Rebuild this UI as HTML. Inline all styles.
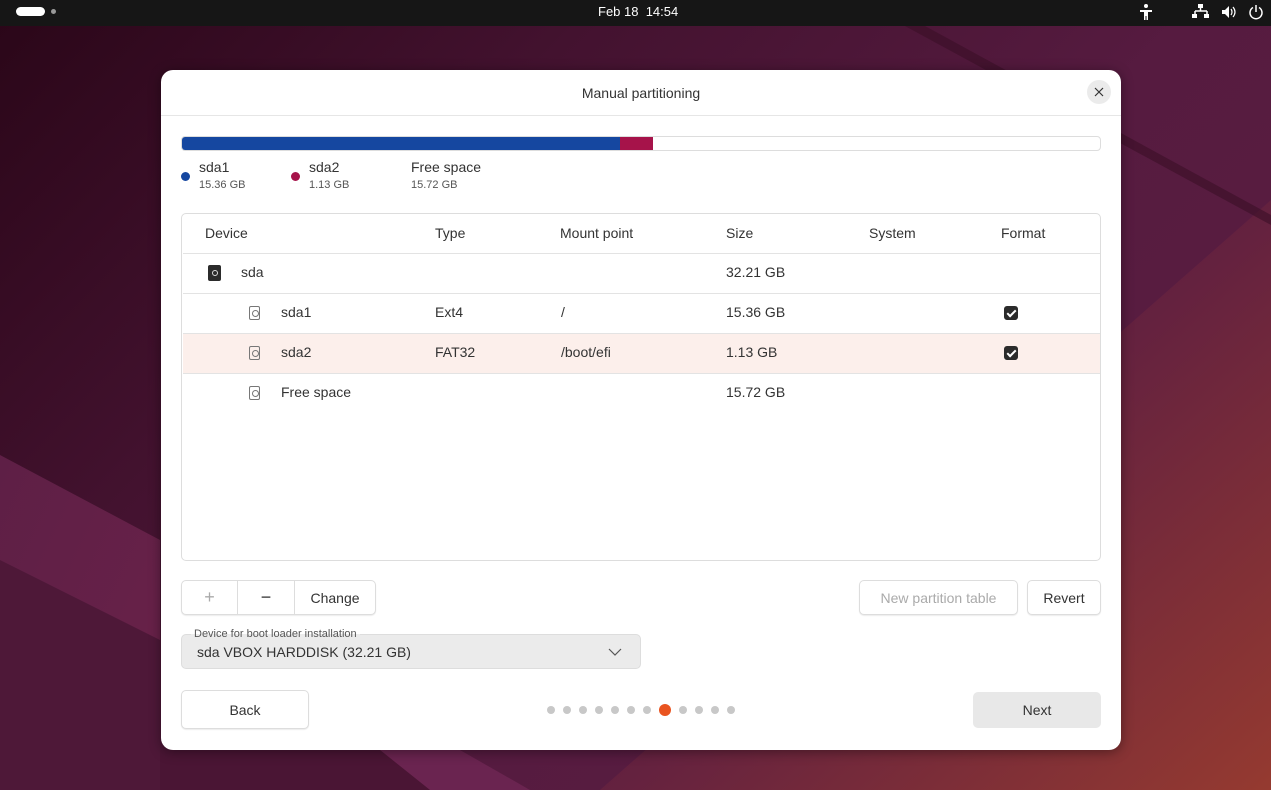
<!DOCTYPE html>
<html><head><meta charset="utf-8">
<style>
*{box-sizing:border-box;margin:0;padding:0}
body{width:1271px;height:790px;overflow:hidden;font-family:"Liberation Sans",sans-serif;position:relative;background:#3d0f2b}
.top{position:absolute;left:0;top:0;width:1271px;height:26px;background:#161616;color:#fff;font-size:13px}
.dlg{position:absolute;left:161px;top:70px;width:960px;height:680px;background:#fff;border-radius:12px;box-shadow:0 2px 12px rgba(0,0,0,.4)}
.a{position:absolute}
.t{font-size:14px;color:#333}
.s{font-size:11px;color:#555}
.btn{position:absolute;border:1px solid #ddd;border-radius:5px;background:#fff;box-shadow:0 1px 1px rgba(0,0,0,.08);font-size:14px;color:#333;display:flex;align-items:center;justify-content:center}
.row{position:absolute;left:1px;width:917px;height:40px;border-top:1px solid #e3e3e3}
.ico{position:absolute;width:11px;height:14px;border:1px solid #777;border-radius:2px}
.ico:after{content:"";position:absolute;left:2px;top:3px;width:5px;height:5px;border:1px solid #777;border-radius:50%}
.cb{position:absolute;width:14px;height:14px;background:#2b2b2b;border-radius:3px}
.cb:after{content:"";position:absolute;left:5px;top:2px;width:3px;height:7px;border:solid #fff;border-width:0 2px 2px 0;transform:rotate(45deg)}
.dot{position:absolute;top:706px;width:8px;height:8px;border-radius:50%;background:#c8c8c8}
</style></head><body>
<svg class="a" style="left:0;top:0" width="1271" height="790" viewBox="0 0 1271 790">
<defs>
<linearGradient id="g1" x1="0" y1="0" x2="1" y2="0.6"><stop offset="0" stop-color="#2a0618"/><stop offset="0.35" stop-color="#43122f"/><stop offset="0.7" stop-color="#561b40"/><stop offset="1" stop-color="#5a1d40"/></linearGradient>
<linearGradient id="g2" x1="0.2" y1="0.2" x2="1" y2="1"><stop offset="0" stop-color="#561b3e" stop-opacity="0"/><stop offset="0.4" stop-color="#65223f"/><stop offset="1" stop-color="#953a30"/></linearGradient>
<linearGradient id="g3" x1="0" y1="0" x2="1" y2="1"><stop offset="0" stop-color="#5e1f46"/><stop offset="1" stop-color="#6a2249"/></linearGradient>
</defs>
<rect width="1271" height="790" fill="url(#g1)"/>
<polygon points="600,790 1271,200 1271,790" fill="url(#g2)"/>
<polygon points="905,26 925,26 1271,215 1271,225" fill="#3a0f26" opacity="0.6"/>
<polygon points="0,455 160,540 160,790 0,790" fill="url(#g3)"/>
<polygon points="0,560 160,640 160,790 0,790" fill="#4e1838"/>
<polygon points="160,750 400,750 520,790 160,790" fill="#4a1534"/>
<polygon points="380,750 460,750 530,790 430,790" fill="#6a2450"/>
</svg>
<div class="top">
 <div class="a" style="left:16px;top:7px;width:29px;height:9px;border-radius:5px;background:#fff"></div>
 <div class="a" style="left:51px;top:9px;width:5px;height:5px;border-radius:50%;background:#999"></div>
 <div class="a" style="left:598px;top:4px;color:#fff">Feb 18&nbsp; 14:54</div>
 <svg class="a" style="left:1138px;top:3px" width="16" height="18" viewBox="0 0 16 18"><circle cx="8" cy="3" r="2" fill="#fff"/><path d="M2 7h12v2h-4v8h-1.5v-4h-1v4H6V9H2z" fill="#fff"/></svg>
 <svg class="a" style="left:1192px;top:3px" width="18" height="16" viewBox="0 0 18 16"><rect x="6" y="1" width="5" height="4" fill="#fff"/><path d="M8.5 5v3M3 8h12M3 8v3M15 8v3" stroke="#fff" stroke-width="1.5" fill="none"/><rect x="0" y="11" width="5" height="4" fill="#fff"/><rect x="12" y="11" width="5" height="4" fill="#fff"/></svg>
 <svg class="a" style="left:1221px;top:4px" width="16" height="16" viewBox="0 0 16 16"><path d="M1 6h3l4-4v12l-4-4H1z" fill="#fff"/><path d="M10 5q2 3 0 6M12 3q4 5 0 10" stroke="#fff" stroke-width="1.2" fill="none"/></svg>
 <svg class="a" style="left:1248px;top:3px" width="16" height="18" viewBox="0 0 16 18"><path d="M5 4.5A6 6 0 1 0 11 4.5" stroke="#fff" stroke-width="1.5" fill="none"/><path d="M8 2v7" stroke="#fff" stroke-width="1.5"/></svg>
</div>
<div class="dlg">
 <div class="a t" style="left:0;width:960px;top:15px;text-align:center">Manual partitioning</div>
 <div class="a" style="left:926px;top:10px;width:24px;height:24px;border-radius:50%;background:#ebebeb"></div>
 <svg class="a" style="left:933px;top:17px" width="10" height="10" viewBox="0 0 10 10"><path d="M1 1l8 8M9 1l-8 8" stroke="#333" stroke-width="1.2"/></svg>
 <div class="a" style="left:0;top:45px;width:960px;height:1px;background:#e6e6e6"></div>
 <div class="a" style="left:20px;top:66px;width:920px;height:15px;border:1px solid #ddd;border-radius:4px;overflow:hidden">
  <div class="a" style="left:0;top:0;width:438px;height:15px;background:#1547a0"></div>
  <div class="a" style="left:438px;top:0;width:33px;height:15px;background:#a6134a"></div>
 </div>
 <div class="a" style="left:20px;top:102px;width:9px;height:9px;border-radius:50%;background:#1547a0"></div>
 <div class="a t" style="left:38px;top:89px">sda1</div><div class="a s" style="left:38px;top:109px">15.36 GB</div>
 <div class="a" style="left:130px;top:102px;width:9px;height:9px;border-radius:50%;background:#a6134a"></div>
 <div class="a t" style="left:148px;top:89px">sda2</div><div class="a s" style="left:148px;top:109px">1.13 GB</div>
 <div class="a t" style="left:250px;top:89px">Free space</div><div class="a s" style="left:250px;top:109px">15.72 GB</div>

 <div class="a" style="left:20px;top:143px;width:920px;height:348px;border:1px solid #ddd;border-radius:5px">
  <div class="a t" style="left:23px;top:11px">Device</div>
  <div class="a t" style="left:253px;top:11px">Type</div>
  <div class="a t" style="left:378px;top:11px">Mount point</div>
  <div class="a t" style="left:544px;top:11px">Size</div>
  <div class="a t" style="left:687px;top:11px">System</div>
  <div class="a t" style="left:819px;top:11px">Format</div>
  <div class="row" style="top:39px"><div class="a" style="left:25px;top:11px;width:13px;height:16px;background:#2b2b2b;border-radius:2px"></div><div class="a" style="left:29px;top:16px;width:6px;height:6px;border:1px solid #ddd;border-radius:50%"></div><div class="a t" style="left:58px;top:10px">sda</div><div class="a t" style="left:543px;top:10px">32.21 GB</div></div>
  <div class="row" style="top:79px"><div class="ico" style="left:66px;top:12px"></div><div class="a t" style="left:98px;top:10px">sda1</div><div class="a t" style="left:252px;top:10px">Ext4</div><div class="a t" style="left:378px;top:10px">/</div><div class="a t" style="left:543px;top:10px">15.36 GB</div><div class="cb" style="left:821px;top:12px"></div></div>
  <div class="row" style="top:119px;background:#fcefeb"><div class="ico" style="left:66px;top:12px"></div><div class="a t" style="left:98px;top:10px">sda2</div><div class="a t" style="left:252px;top:10px">FAT32</div><div class="a t" style="left:378px;top:10px">/boot/efi</div><div class="a t" style="left:543px;top:10px">1.13 GB</div><div class="cb" style="left:821px;top:12px"></div></div>
  <div class="row" style="top:159px"><div class="ico" style="left:66px;top:12px"></div><div class="a t" style="left:98px;top:10px">Free space</div><div class="a t" style="left:543px;top:10px">15.72 GB</div></div>
 </div>

 <div class="btn" style="left:20px;top:510px;width:195px;height:35px;justify-content:flex-start">
  <div style="width:56px;text-align:center;color:#aaa;font-size:18px;border-right:1px solid #ddd;height:33px;line-height:33px">+</div>
  <div style="width:57px;text-align:center;font-size:18px;border-right:1px solid #ddd;height:33px;line-height:33px">−</div>
  <div style="width:80px;text-align:center">Change</div>
 </div>
 <div class="btn" style="left:698px;top:510px;width:159px;height:35px;color:#aaa">New partition table</div>
 <div class="btn" style="left:866px;top:510px;width:74px;height:35px">Revert</div>

 <div class="a" style="left:20px;top:564px;width:460px;height:35px;background:#ebebeb;border:1px solid #ddd;border-radius:5px"></div>
 <div class="a" style="left:30px;top:558px;padding:0 3px;font-size:11px;color:#555;background:linear-gradient(#fff 50%,#ebebeb 50%)">Device for boot loader installation</div>
 <div class="a t" style="left:36px;top:574px">sda VBOX HARDDISK (32.21 GB)</div>
 <svg class="a" style="left:447px;top:578px" width="14" height="9" viewBox="0 0 14 9"><path d="M1 1l6 6 6-6" stroke="#555" stroke-width="1.2" fill="none"/></svg>

 <div class="btn" style="left:20px;top:620px;width:128px;height:39px">Back</div>
 <div class="a" style="left:812px;top:622px;width:128px;height:36px;background:#e8e8e8;border-radius:5px;font-size:14px;color:#333;text-align:center;line-height:36px">Next</div>
</div>
<div class="dot" style="left:547px"></div><div class="dot" style="left:563px"></div><div class="dot" style="left:579px"></div><div class="dot" style="left:595px"></div><div class="dot" style="left:611px"></div><div class="dot" style="left:627px"></div><div class="dot" style="left:643px"></div>
<div class="dot" style="left:659px;top:704px;width:12px;height:12px;background:#e95420"></div>
<div class="dot" style="left:679px"></div><div class="dot" style="left:695px"></div><div class="dot" style="left:711px"></div><div class="dot" style="left:727px"></div>
</body></html>
